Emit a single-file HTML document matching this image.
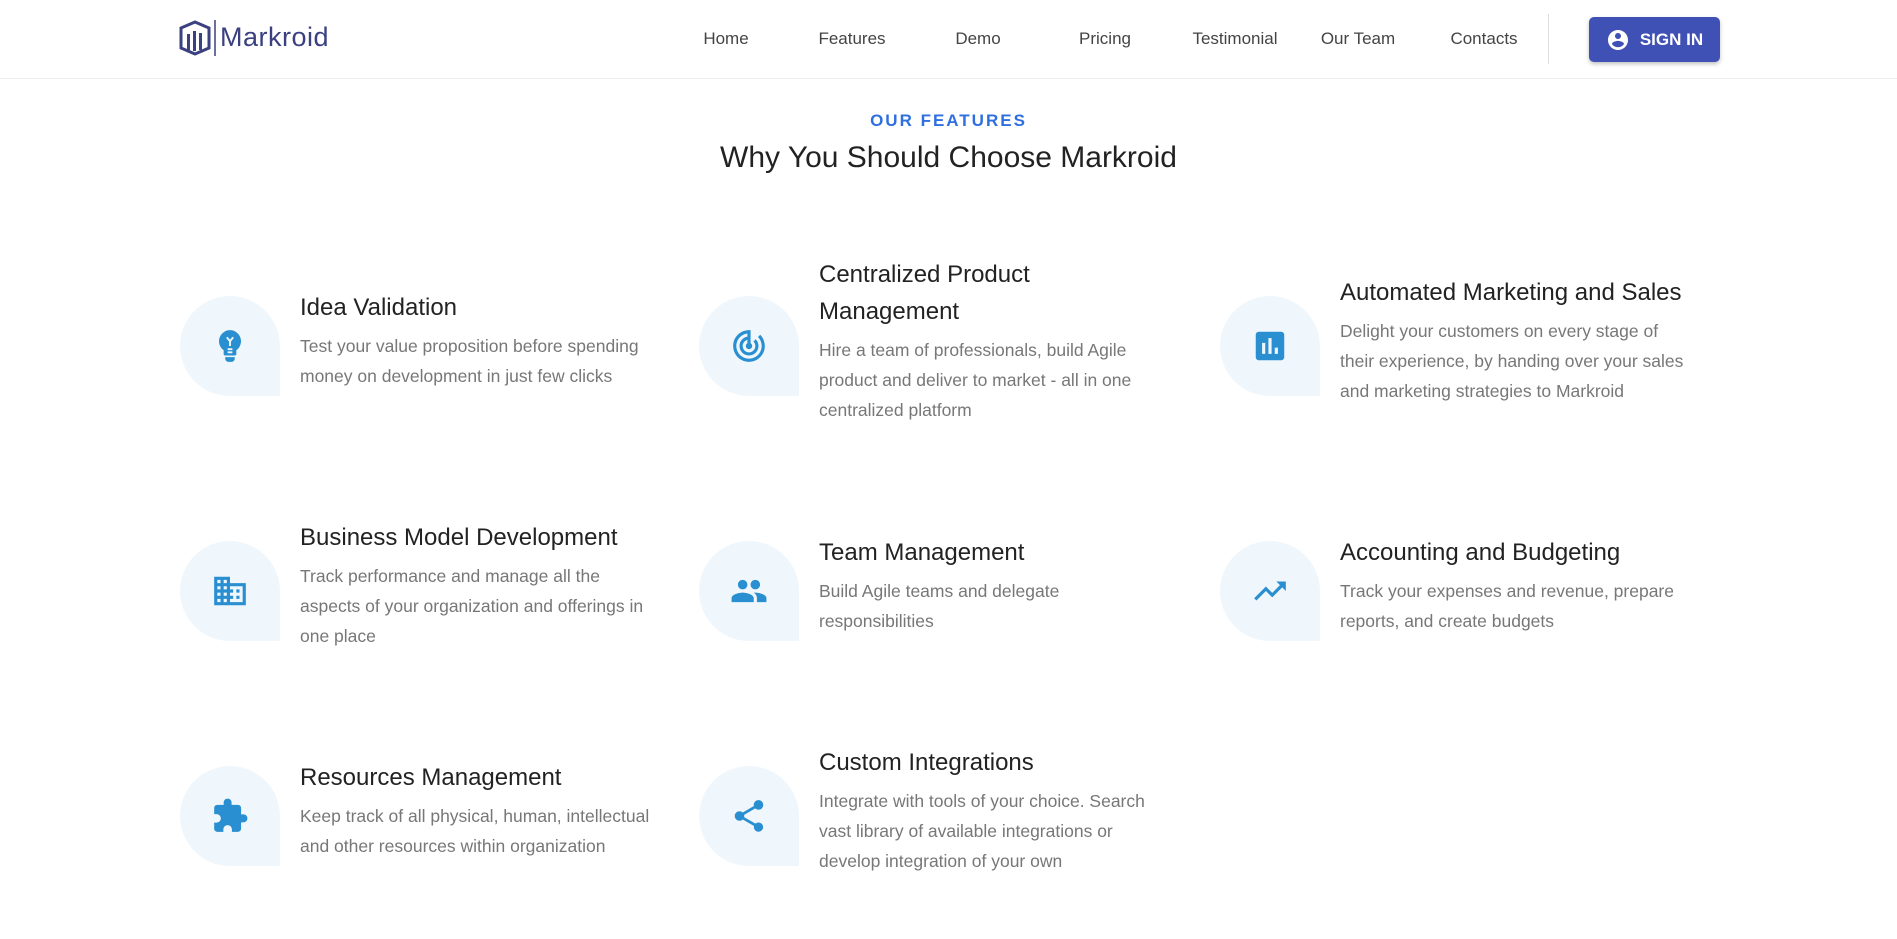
<!DOCTYPE html>
<html><head><meta charset="utf-8"><style>
*{margin:0;padding:0;box-sizing:border-box}
body{width:1897px;height:939px;background:#fff;font-family:"Liberation Sans",sans-serif;position:relative;overflow:hidden}
.hdr{position:absolute;left:0;top:0;width:1897px;height:79px;border-bottom:1px solid #eee}
.nav{position:absolute;top:29px;font-size:17px;color:#444;transform:translateX(-50%);white-space:nowrap}
.btn{position:absolute;left:1589px;top:17px;width:131px;height:45px;background:#3f51b5;border-radius:5px;box-shadow:0 2px 4px rgba(0,0,0,.25);color:#fff;font-weight:bold;font-size:17px;display:flex;align-items:center;justify-content:center;gap:10px}
.card{position:absolute;display:flex;align-items:center;height:100px}
.blob{width:100px;height:100px;background:#eff7fd;border-radius:50px 50px 0 50px;display:flex;align-items:center;justify-content:center;flex:none;margin-right:20px}
.blob svg{width:38px;height:38px;fill:#2a8fd1}
.tx{position:relative;top:-6px}
.t{font-size:24px;line-height:37px;color:#222}
.d{font-size:17.5px;line-height:30px;color:#777;margin-top:5px}
</style></head><body>
<div class="hdr">
 <svg style="position:absolute;left:179px;top:20px" width="40" height="36" viewBox="0 0 40 36"><path d="M16 2 L30 8 V28 L16 34 L2 28 V8 Z" fill="none" stroke="#3a4080" stroke-width="3"/><rect x="8" y="14" width="3" height="16" fill="#3a4080"/><rect x="14" y="11" width="3" height="20" fill="#3a4080"/><rect x="20" y="13" width="3" height="17" fill="#3a4080"/><line x1="36" y1="0" x2="36" y2="36" stroke="#3a4080" stroke-width="1.5"/></svg>
 <div style="position:absolute;left:220px;top:22px;font-size:27px;color:#3a4080;letter-spacing:.5px">Markroid</div>
 <div class="nav" style="left:726px">Home</div>
 <div class="nav" style="left:852px">Features</div>
 <div class="nav" style="left:978px">Demo</div>
 <div class="nav" style="left:1105px">Pricing</div>
 <div class="nav" style="left:1235px">Testimonial</div>
 <div class="nav" style="left:1358px">Our Team</div>
 <div class="nav" style="left:1484px">Contacts</div>
 <div style="position:absolute;left:1548px;top:14px;width:1px;height:50px;background:#ddd"></div>
 <div class="btn"><svg width="24" height="24" viewBox="0 0 24 24" fill="#fff"><path d="M12 2C6.48 2 2 6.48 2 12s4.48 10 10 10 10-4.48 10-10S17.52 2 12 2zm0 3c1.66 0 3 1.34 3 3s-1.34 3-3 3-3-1.34-3-3 1.34-3 3-3zm0 14.2c-2.5 0-4.710-1.28-6-3.22.03-1.99 4-3.08 6-3.08 1.99 0 5.97 1.09 6 3.08-1.29 1.94-3.5 3.22-6 3.22z"/></svg>SIGN IN</div>
</div>
<div style="position:absolute;left:0;width:1897px;top:111px;text-align:center;font-size:17px;font-weight:bold;color:#2f6fe0;letter-spacing:2px">OUR FEATURES</div>
<div style="position:absolute;left:0;width:1897px;top:141px;text-align:center;font-size:30px;color:#222">Why You Should Choose Markroid</div>

<div class="card" style="left:180px;top:296px"><div class="blob"><svg viewBox="0 0 24 24"><path d="M12 2a7 7 0 0 0-4 12.7V17a1 1 0 0 0 1 1h6a1 1 0 0 0 1-1v-2.3A7 7 0 0 0 12 2zM9 19h6v1a2 2 0 0 1-2 2h-2a2 2 0 0 1-2-2z"/><path d="M10 6.5l2 2.5 2-2.5M12 9v3M10.5 14h3M10.5 16h3" stroke="#eff7fd" stroke-width="1.2" fill="none"/></svg></div><div class="tx"><div class="t">Idea Validation</div><div class="d">Test your value proposition before spending<br>money on development in just few clicks</div></div></div>

<div class="card" style="left:699px;top:296px"><div class="blob"><svg viewBox="0 0 24 24"><path d="M19.07 4.93l-1.41 1.41C19.1 7.79 20 9.79 20 12c0 4.42-3.58 8-8 8s-8-3.58-8-8c0-4.08 3.05-7.44 7-7.93v2.02C8.16 6.57 6 9.03 6 12c0 3.31 2.69 6 6 6s6-2.69 6-6c0-1.66-.67-3.16-1.76-4.24l-1.41 1.41C15.55 9.9 16 10.9 16 12c0 2.21-1.79 4-4 4s-4-1.79-4-4c0-1.86 1.28-3.41 3-3.860v2.14c-.6.35-1 .98-1 1.72 0 1.1.9 2 2 2s2-.9 2-2c0-.74-.4-1.38-1-1.72V2h-1C6.48 2 2 6.48 2 12s4.48 10 10 10 10-4.48 10-10c0-2.76-1.12-5.26-2.93-7.07z"/></svg></div><div class="tx"><div class="t">Centralized Product<br>Management</div><div class="d">Hire a team of professionals, build Agile<br>product and deliver to market - all in one<br>centralized platform</div></div></div>

<div class="card" style="left:1220px;top:296px"><div class="blob"><svg viewBox="0 0 24 24"><path d="M19 3H5c-1.1 0-2 .9-2 2v14c0 1.1.9 2 2 2h14c1.1 0 2-.9 2-2V5c0-1.1-.9-2-2-2zM9 17H7v-7h2v7zm4 0h-2V7h2v10zm4 0h-2v-4h2v4z"/></svg></div><div class="tx"><div class="t">Automated Marketing and Sales</div><div class="d">Delight your customers on every stage of<br>their experience, by handing over your sales<br>and marketing strategies to Markroid</div></div></div>

<div class="card" style="left:180px;top:541px"><div class="blob"><svg viewBox="0 0 24 24"><path d="M12 7V3H2v18h20V7H12zM6 19H4v-2h2v2zm0-4H4v-2h2v2zm0-4H4V9h2v2zm0-4H4V5h2v2zm4 12H8v-2h2v2zm0-4H8v-2h2v2zm0-4H8V9h2v2zm0-4H8V5h2v2zm10 12h-8v-2h2v-2h-2v-2h2v-2h-2V9h8v10zm-2-8h-2v2h2v-2zm0 4h-2v2h2v-2z"/></svg></div><div class="tx"><div class="t">Business Model Development</div><div class="d">Track performance and manage all the<br>aspects of your organization and offerings in<br>one place</div></div></div>

<div class="card" style="left:699px;top:541px"><div class="blob"><svg viewBox="0 0 24 24"><path d="M16 11c1.66 0 2.99-1.34 2.99-3S17.66 5 16 5c-1.66 0-3 1.34-3 3s1.34 3 3 3zm-8 0c1.66 0 2.99-1.34 2.99-3S9.66 5 8 5C6.34 5 5 6.34 5 8s1.34 3 3 3zm0 2c-2.33 0-7 1.17-7 3.5V19h14v-2.5c0-2.33-4.67-3.5-7-3.5zm8 0c-.29 0-.62.02-.97.05 1.16.84 1.97 1.97 1.97 3.45V19h6v-2.5c0-2.33-4.67-3.5-7-3.5z"/></svg></div><div class="tx"><div class="t">Team Management</div><div class="d">Build Agile teams and delegate<br>responsibilities</div></div></div>

<div class="card" style="left:1220px;top:541px"><div class="blob"><svg viewBox="0 0 24 24"><path d="M16 6l2.29 2.29-4.88 4.88-4-4L2 16.59 3.41 18l6-6 4 4 6.3-6.29L22 12V6z"/></svg></div><div class="tx"><div class="t">Accounting and Budgeting</div><div class="d">Track your expenses and revenue, prepare<br>reports, and create budgets</div></div></div>

<div class="card" style="left:180px;top:766px"><div class="blob"><svg viewBox="0 0 24 24"><path d="M20.5 11H19V7c0-1.1-.9-2-2-2h-4V3.5C13 2.12 11.88 1 10.5 1S8 2.12 8 3.5V5H4c-1.1 0-1.99.9-1.99 2v3.8H3.5c1.49 0 2.7 1.21 2.7 2.7s-1.21 2.7-2.7 2.7H2V20c0 1.1.9 2 2 2h3.8v-1.5c0-1.49 1.21-2.7 2.7-2.7 1.49 0 2.7 1.21 2.7 2.7V22H17c1.1 0 2-.9 2-2v-4h1.5c1.38 0 2.5-1.12 2.5-2.5S21.88 11 20.5 11z"/></svg></div><div class="tx"><div class="t">Resources Management</div><div class="d">Keep track of all physical, human, intellectual<br>and other resources within organization</div></div></div>

<div class="card" style="left:699px;top:766px"><div class="blob"><svg viewBox="0 0 24 24"><path d="M18 16.08c-.76 0-1.44.3-1.96.77L8.91 12.7c.05-.23.09-.46.09-.7s-.04-.47-.09-.7l7.05-4.11c.54.5 1.25.81 2.04.81 1.66 0 3-1.34 3-3s-1.34-3-3-3-3 1.34-3 3c0 .24.04.47.09.7L8.04 9.81C7.5 9.31 6.79 9 6 9c-1.66 0-3 1.34-3 3s1.34 3 3 3c.79 0 1.5-.31 2.04-.81l7.12 4.16c-.05.21-.08.43-.08.65 0 1.61 1.31 2.92 2.92 2.92 1.61 0 2.92-1.31 2.92-2.92s-1.31-2.92-2.92-2.92z"/></svg></div><div class="tx"><div class="t">Custom Integrations</div><div class="d">Integrate with tools of your choice. Search<br>vast library of available integrations or<br>develop integration of your own</div></div></div>
</body></html>
